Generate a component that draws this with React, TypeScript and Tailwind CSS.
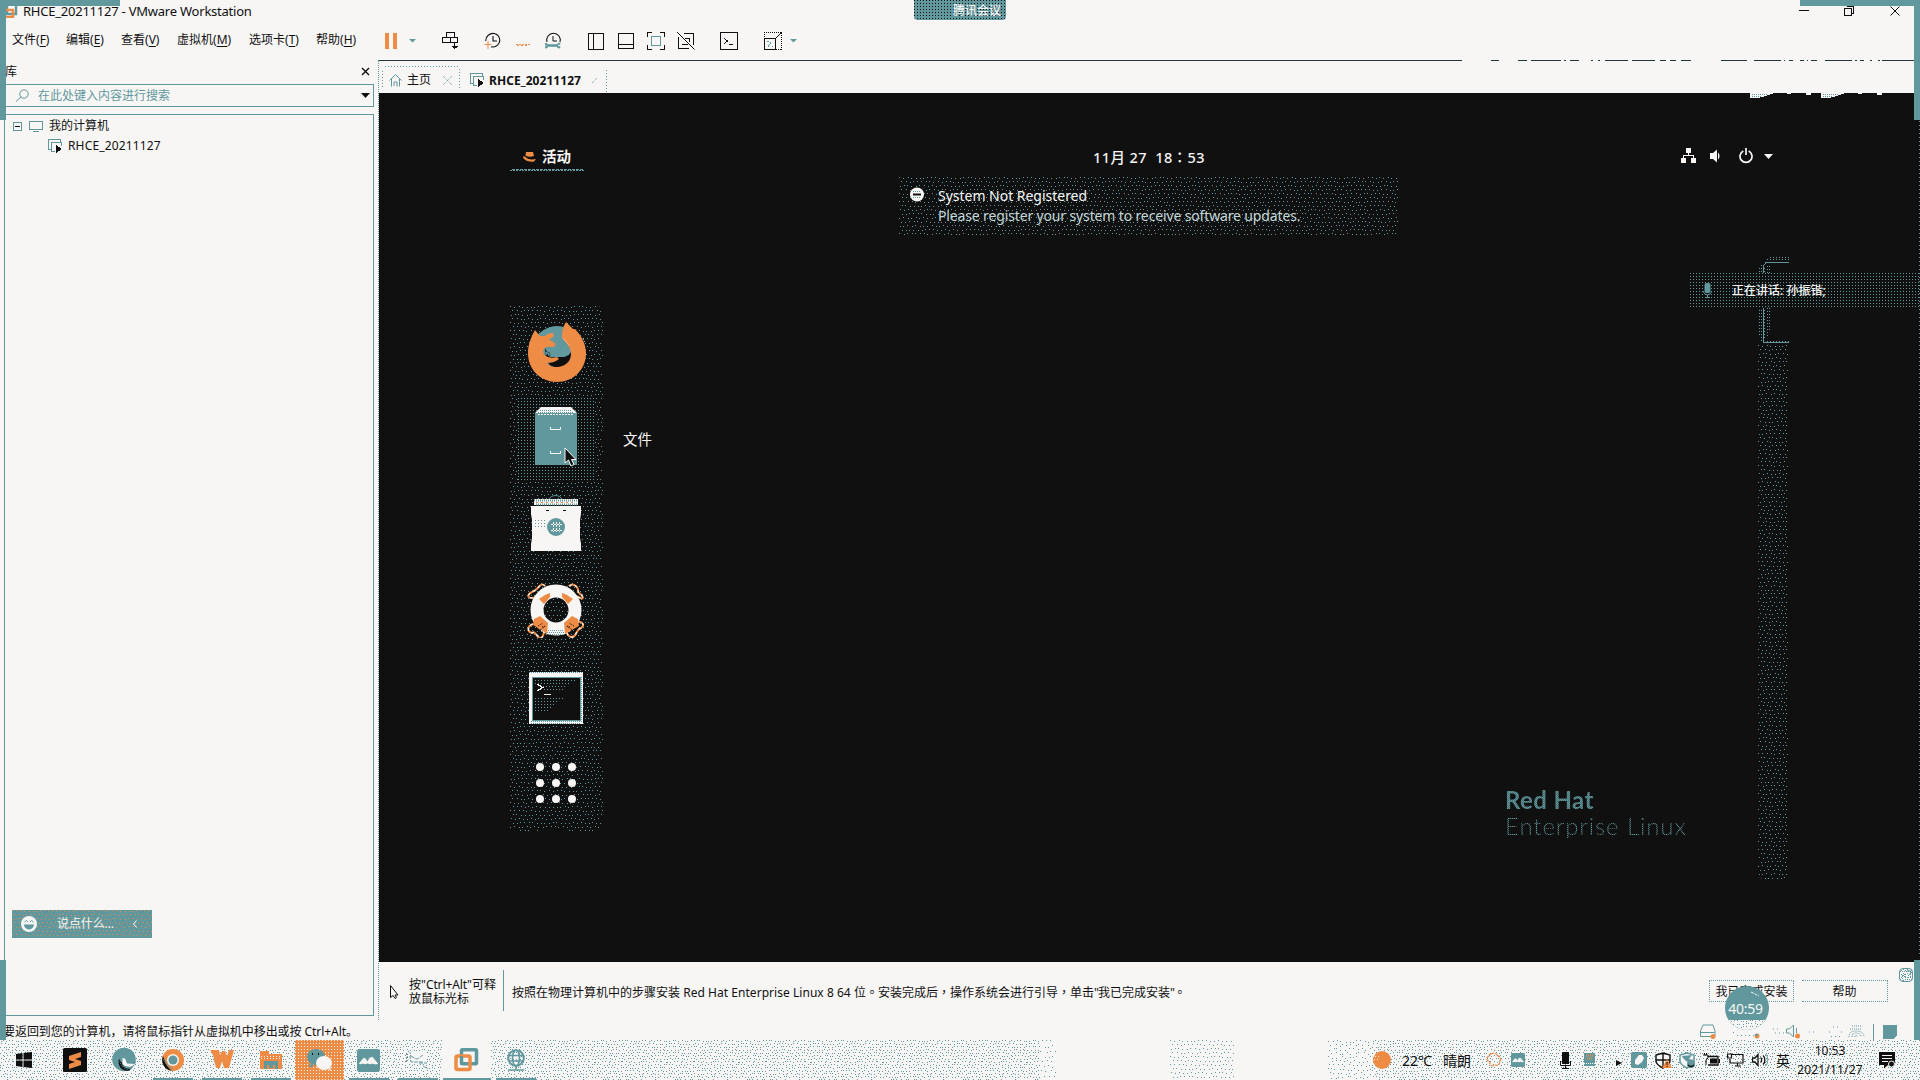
import { useId, type ReactNode } from 'react';

const TEAL = '#61989e';
const INK = '#101010';
const PAPER = '#f7f6f5';
const ORANGE = '#ee8c46';

/* Speckled fill: one pixel dots on a jittered grid, repeated as a tile. */
function Speckle({ cell = 4, jitter = 1, color = TEAL, className = '' }: { cell?: number; jitter?: number; color?: string; className?: string }) {
  const id = useId();
  const n = 24;
  const size = cell * n;
  let seed = 7 + cell * 13;
  const rnd = () => {
    seed = (seed * 1103515245 + 12345) % 2147483648;
    return seed / 2147483648;
  };
  let d = '';
  for (let r = 0; r < n; r++) {
    for (let c = 0; c < n; c++) {
      const x = Math.floor(c * cell + (r % 2 && jitter ? cell / 2 : 0) + rnd() * (jitter + 1)) % size;
      const y = Math.floor(r * cell + rnd() * (jitter + 1)) % size;
      d += `M${x} ${y}h1v1h-1z`;
    }
  }
  return (
    <svg aria-hidden className={`pointer-events-none absolute inset-0 h-full w-full ${className}`} shapeRendering="crispEdges">
      <defs>
        <pattern id={id} width={size} height={size} patternUnits="userSpaceOnUse">
          <path d={d} fill={color} />
        </pattern>
      </defs>
      <rect width="100%" height="100%" fill={`url(#${id})`} />
    </svg>
  );
}

function Ico({ w, h, className = '', children, crisp = false }: { w: number; h: number; className?: string; children: ReactNode; crisp?: boolean }) {
  return (
    <svg width={w} height={h} viewBox={`0 0 ${w} ${h}`} fill="none" className={`shrink-0 ${className}`} shapeRendering={crisp ? 'crispEdges' : 'auto'}>
      {children}
    </svg>
  );
}

/* Full-width punctuation centred in its cell. */
function Mark({ children }: { children: ReactNode }) {
  return <span className="font-['Noto_Sans_CJK_TC',sans-serif]">{children}</span>;
}

function VmGlyph({ className = '' }: { className?: string }) {
  return (
    <Ico w={15} h={15} className={className} crisp>
      <path d="M2.5 10.5H.5V.5h12v3M3.5 12.5v-9h10v3M4 12.5h3" stroke={TEAL} />
      <path d="M8 6v8l6-4z" fill={INK} />
    </Ico>
  );
}

function TitleBar() {
  return (
    <header className="flex h-[22px] shrink-0 items-center">
      <Ico w={12} h={13} className="ml-[6px]">
        <path d="M1 1v8h9V1" stroke={TEAL} strokeWidth="2.4" />
        <path d="M0 5h7v7H0" stroke={ORANGE} strokeWidth="2.4" />
      </Ico>
      <span className="ml-[5px] whitespace-pre text-[13px] leading-[22px] tracking-[-0.230px]">RHCE_20211127 - VMware Workstation</span>
      <div className="ml-auto flex items-center pr-[20px]">
        <Ico w={10} h={12} crisp><path d="M0 5.5h10" stroke={INK} /></Ico>
        <Ico w={10} h={12} className="ml-[35px]" crisp><path d="M.5 3.500h7v7h-7zM2.500 1.500h7v7h-2" stroke={INK} /></Ico>
        <Ico w={10} h={12} className="ml-[36px]"><path d="M.5 1.500l9 9M9.500 1.500l-9 9" stroke={INK} /></Ico>
      </div>
    </header>
  );
}

const MENUS = [
  { t: '文件', k: 'F', c: 'w-[54px]' },
  { t: '编辑', k: 'E', c: 'w-[55px]' },
  { t: '查看', k: 'V', c: 'w-[56px]' },
  { t: '虚拟机', k: 'M', c: 'w-[72px]' },
  { t: '选项卡', k: 'T', c: 'w-[67px]' },
  { t: '帮助', k: 'H', c: 'w-[69px]' },
];

function MenuRow() {
  return (
    <nav className="flex h-[38px] shrink-0 items-center pl-[12px] text-[12px]">
      {MENUS.map((m) => (
        <span key={m.k} className={`${m.c} pb-[2px] whitespace-nowrap`}>
          {m.t}(<u className="underline-offset-2">{m.k}</u>)
        </span>
      ))}
      <Ico w={12} h={16} crisp><path d="M0 0h4v16H0zM8 0h4v16H8z" fill={ORANGE} /></Ico>
      <Ico w={7} h={4} className="ml-[12px]"><path d="M0 0h7L3.500 3.500z" fill={TEAL} /></Ico>
      <Ico w={18} h={18} className="ml-[26px]" crisp>
        <path d="M4.500 5.500v-5h8v5M.5 5.500h8v5h-8zM8.500 5.500h7v5h-7M12.500 10.500v6M9.500 14.500h6M10.500 15.500h4" stroke={INK} />
      </Ico>
      <Ico w={18} h={18} className="ml-[24px]">
        <path d="M4.500 3A6.800 6.800 0 1 1 7 14.700M1.800 9a7 7 0 0 1 2.700-6M9 4v5h4" stroke={INK} strokeWidth="1.100" />
        <path d="M.5 12.500h7M4 9v8" stroke={ORANGE} />
      </Ico>
      <Ico w={14} h={18} className="ml-[14px]" crisp>
        <path d="M0 12.500h14M1 13.500h2M5 13.500h2M9 13.500h2" stroke={ORANGE} strokeDasharray="2 1" />
      </Ico>
      <Ico w={18} h={18} className="ml-[15px]">
        <path d="M2 10A6.800 6.800 0 1 1 15 10" stroke={INK} strokeWidth="1.100" />
        <path d="M8 4v5h4" stroke={INK} />
        <path d="M0 11.500h2l1 1h9l1.500-1.500H15v1.500h-2v2h2V16h-2l-1.500-1.500H3l-1 1.500H0v-1.500h1.500v-1.500H0z" fill={TEAL} stroke={TEAL} strokeWidth=".6" />
      </Ico>
      <Ico w={16} h={17} className="ml-[25px]" crisp><path d="M.5.5h15v16H.5zM5.500.5v16" stroke={INK} /></Ico>
      <Ico w={16} h={17} className="ml-[14px]" crisp><path d="M.5.5h15v15H.5zM.5 11.500h15" stroke={INK} /></Ico>
      <Ico w={18} h={18} className="ml-[13px]" crisp>
        <path d="M.5 5V.5H5M13 .5h4.500V5M17.500 13v4.500H13M5 17.500H.5V13" stroke={INK} />
        <path d="M4.500 4.500h9v9h-9z" stroke={TEAL} />
      </Ico>
      <Ico w={18} h={18} className="ml-[12px]">
        <path d="M7 1.500h9.500v11M1.500 5v11h10M5 12.500h5.500M12.500 10V6H8" stroke={INK} shapeRendering="crispEdges" />
        <path d="M0 0l17.500 17.500" stroke={INK} />
      </Ico>
      <Ico w={18} h={18} className="ml-[25px]" crisp>
        <path d="M.5.5h17v17H.5z" stroke={INK} />
        <path d="M4.500 6.500l3 2.500-3 2.500M9 12.500h4" stroke={INK} />
      </Ico>
      <Ico w={18} h={18} className="ml-[26px]" crisp>
        <path d="M0 .5h17.500V18" stroke={INK} strokeDasharray="1 1" />
        <path d="M.5 0v6M12 17.500h6" stroke={INK} strokeDasharray="1 1" />
        <path d="M.5 6.500h11v11H.5zM11.500 6.500l6-6" stroke={INK} />
        <path d="M3 9.500h2M7 10.500l-3 4M4 13.500h1M8 14.500h1" stroke={TEAL} />
      </Ico>
      <Ico w={7} h={4} className="ml-[8px]"><path d="M0 0h7L3.500 3.500z" fill={TEAL} /></Ico>
    </nav>
  );
}

function Library() {
  return (
    <aside className="flex w-[374px] shrink-0 flex-col text-[12px]">
      <div className="flex h-[24px] items-center pr-[4px] pl-[5px]">
        <span>库</span>
        <Ico w={9} h={9} className="mb-[2px] ml-auto"><path d="M1 1l7 7M8 1L1 8" stroke={INK} strokeWidth="1.400" /></Ico>
      </div>
      <div className="flex h-[23px] items-center border border-l-0 border-[#61989e] pr-[3px] text-[#61989e]">
        <Ico w={13} h={13} className="ml-[16px]"><circle cx="8" cy="5" r="4.200" stroke={TEAL} /><path d="M5 8l-5 4.500" stroke={TEAL} /></Ico>
        <span className="ml-[9px]">在此处键入内容进行搜索</span>
        <Ico w={9} h={5} className="ml-auto"><path d="M0 0h9L4.500 5z" fill={INK} /></Ico>
      </div>
      <div className="mt-[7px] ml-[4px] flex h-[902px] flex-col border border-[#61989e]">
        <div className="mt-px flex h-[20px] items-center pl-[8px]">
          <Ico w={9} h={9} crisp><rect x=".5" y=".5" width="8" height="8" rx="1" stroke={TEAL} /><path d="M2 4.500h5" stroke={INK} /></Ico>
          <Ico w={14} h={11} className="ml-[7px]" crisp><path d="M.5.5h13v8H.5zM4 10.500h6" stroke={TEAL} /></Ico>
          <span className="ml-[6px]">我的计算机</span>
        </div>
        <div className="flex h-[20px] items-center pl-[43px]">
          <VmGlyph />
          <span className="ml-[5px] tracking-[0.150px]">RHCE_20211127</span>
        </div>
        <div className="relative mt-auto mb-[77px] ml-[7px] flex h-[28px] w-[140px] items-center bg-[#61989e] text-[#f7f6f5]">
          <Speckle cell={4} color={ORANGE} />
          <Ico w={16} h={16} className="relative ml-[9px]">
            <circle cx="8" cy="8" r="8" fill={PAPER} />
            <path d="M3.500 6l2-1.500L7 6M9 6l1.500-1.500 2 1.500" stroke={TEAL} />
            <path d="M3 8.500h10a5 5 0 0 1-10 0z" fill={TEAL} />
          </Ico>
          <span className="relative ml-[20px] tracking-[-0.100px]">说点什么...</span>
          <Ico w={4} h={8} className="relative ml-[19px]"><path d="M3.500.5L.5 4l3 3.500" stroke={PAPER} /></Ico>
        </div>
      </div>
    </aside>
  );
}

const EDGE: [number, number][] = [
  [0, 1462], [1491, 1499], [1518, 1527], [1531, 1561], [1564, 1566], [1570, 1579], [1591, 1593], [1598, 1600], [1605, 1628],
  [1632, 1655], [1660, 1666], [1670, 1676], [1681, 1691], [1721, 1747], [1754, 1781], [1784, 1785], [1789, 1793], [1800, 1804],
  [1807, 1808], [1811, 1817], [1825, 1852], [1855, 1857], [1860, 1864], [1870, 1872], [1878, 1880], [1882, 1914],
];

function Tabs() {
  return (
    <div className="flex h-[33px] shrink-0 flex-col">
      <svg width="1541" height="1" viewBox="379 0 1541 1" shapeRendering="crispEdges" className="shrink-0">
        {EDGE.map(([a, b]) => <path key={a} d={`M${a || 379} .5H${b}`} stroke="#22393b" />)}
      </svg>
      <div className="flex flex-1 items-stretch text-[12px]">
        <div className="relative mt-[4px] ml-[3px] flex w-[78px] items-center pt-[2px] pl-[7px]">
          <Ico w={78} h={24} className="absolute top-[1px] left-0" crisp>
            <path d="M3 .5h73M77.500 3v20M.5 5v18" stroke={TEAL} strokeDasharray="1 2" />
          </Ico>
          <Ico w={13} h={13}><path d="M.5 6.500l6-6 6 6M2.500 5v7.500M10.500 5v7.500M5 12V8h3v4.500" stroke={TEAL} /></Ico>
          <span className="ml-[5px]">主页</span>
          <Ico w={9} h={9} className="ml-[12px]"><path d="M0 0l9 9M9 0L0 9" stroke={TEAL} strokeDasharray="1 1" /></Ico>
        </div>
        <div className="mt-[8px] flex w-[146px] items-center pb-px pl-[10px]">
          <VmGlyph />
          <span className="ml-[4px] font-bold tracking-[0.050px]">RHCE_20211127</span>
          <Ico w={5} h={5} className="ml-auto mr-[9px]"><path d="M0 5l5-5" stroke={TEAL} strokeDasharray="1 1" /></Ico>
        </div>
        <Ico w={1} h={22} className="mt-[9px]" crisp><path d="M.5 0v22" stroke={TEAL} strokeDasharray="1 2" /></Ico>
      </div>
    </div>
  );
}

function GnomeBar() {
  return (
    <div className="flex h-[42px] items-center pr-[147px] pl-[131px] font-semibold text-[#f7f6f5]">
      <div className="relative mt-[2px] flex h-[26px] w-[74px] items-center pl-[12px]">
        <Ico w={15} h={11}>
          <path d="M4 0h7l1 4c-3 1-6 1-8.500-.500z" fill={ORANGE} />
          <path d="M1 4.500c0 3 5 6 11 5l2-2.500c-5 1-9 0-11-2.500z" fill={ORANGE} />
        </Ico>
        <span className="ml-[5px] text-[14.500px]">活动</span>
        <Ico w={74} h={2} className="absolute -bottom-px left-0" crisp>
          <path d="M0 1.500h74" stroke={TEAL} strokeDasharray="2 1" />
          <path d="M2 .5h72" stroke={TEAL} strokeDasharray="3 1" />
        </Ico>
      </div>
      <span className="mt-[2px] ml-[509px] w-[128px] whitespace-pre text-[14.500px] font-medium tracking-[0.400px]">11月 27  18<Mark>：</Mark>53</span>
      <div className="ml-auto flex items-center">
        <Ico w={16} h={16} crisp><path d="M5 0h5v5H5zM0 10h5v5H0zM10 10h5v5h-5z" fill={PAPER} /><path d="M7.500 5v3M2.500 10V7.500h10V10" stroke={PAPER} /></Ico>
        <Ico w={14} h={14} className="ml-[13px]"><path d="M0 4h3l4-3.500v13L3 10H0zM8 3.500c2 1.500 2 5.500 0 7z" fill={PAPER} /></Ico>
        <Ico w={14} h={16} className="ml-[15px]"><path d="M4.300 3a6 6 0 1 0 5.400 0M7 0v7" stroke={PAPER} strokeWidth="1.700" /></Ico>
        <Ico w={9} h={5} className="ml-[11px]"><path d="M0 0h9L4.500 5z" fill={PAPER} /></Ico>
      </div>
    </div>
  );
}

function Dock() {
  return (
    <div className="relative ml-[131px] h-[525px] w-[93px] overflow-hidden rounded-r-md">
      <Speckle cell={4} />
      <div className="absolute inset-x-[8px] top-[92px] h-[84px] bg-[#101010]"><Speckle cell={3} jitter={0} /></div>
      <div className="relative flex flex-col items-center pr-px">
        <Ico w={60} h={62} className="mt-[15px] ml-px">
          <circle cx="30" cy="30" r="25" fill={TEAL} />
          <path d="M18 27c2 2 1 4 0 6 4 2 8 3 13 3 6 0 10 0 13-5l2 3c1 8-6 13-13 13-9 0-13-5-14-10z" fill={INK} />
          <path d="M19 29c0 2 1 5 4 7h14c4-1 6-3 6-7l-6-8-12 1z" fill={TEAL} />
          <path d="M19 30l5 3M20 33l4 2M36 37l7-3M35 39l8-3M34 41l8-3" stroke={INK} strokeDasharray="1 1" />
          <path d="M8 9c-4 7-7 15-7 23 0 17 13 29 29 29s29-12 29-29c0-9-5-18-11-24l-2 0-7-7c-4 6-4 12-4 16 4 5 9 9 9 16 0 8-7 13-14 13-5 0-8-1-10-4 4 0 8-1 12-4l-2-2c-4 1-8 1-11-1-3-2-4-6-1-8 2-2 6-1 9-1l2-3-4-3-3-1 5-4-1-3c-4 0-6 1-8 3l-5 0z" fill={ORANGE} />
          <path d="M37 18l5 6M56 17l2 5" stroke={PAPER} strokeDasharray="1 2" />
        </Ico>
        <div className="relative mt-[23px] mr-px">
          <Ico w={42} h={60}>
            <path d="M0 7h42v52H0z" fill={TEAL} />
            <path d="M6 1h30l6 6H0z" fill={PAPER} />
            <path d="M3 6.500h36M6 8.500h30M15 10.500h12M5 4.500h32" stroke={TEAL} strokeDasharray="1 1" />
            <path d="M3 8.500h36" stroke={PAPER} strokeDasharray="2 1" />
            <path d="M15.500 21v2.500h10V21M15.500 45v2.500h10V45" stroke={PAPER} />
          </Ico>
          <Ico w={14} h={20} className="absolute top-[41px] left-[29px]">
            <path d="M1 1v15l3.500-3 2.500 6 3-1.500-2.500-5H12z" fill={INK} stroke={PAPER} />
          </Ico>
        </div>
        <Ico w={50} h={58} className="mt-[28px]">
          <path d="M18 6c1-6 12-6 13 0" stroke={TEAL} />
          <path d="M3 5h44v6H3z" fill={PAPER} />
          <path d="M3 6.500h44M5 10.500h41" stroke={TEAL} strokeWidth="2" strokeDasharray="1 1" />
          <path d="M5 8.500h38" stroke={ORANGE} strokeDasharray="2 3" />
          <path d="M0 12h50v8l-1 6v18l1 6v7H0v-7l1-6V26L0 20z" fill={PAPER} />
          <path d="M15 16.500h3M32 16.500h3" stroke={INK} />
          <path d="M4 26.500h12M4 29.500h12M4 32.500h12" stroke={TEAL} strokeDasharray="1 2" />
          <circle cx="25" cy="33" r="9" fill={TEAL} />
          <path d="M20 30.500h11M20 36.500h11M22.500 28v10M25.500 28v10M28.500 28v10" stroke={PAPER} strokeDasharray="2 1" />
        </Ico>
        <Ico w={60} h={56} className="mt-[30px]">
          <path d="M19 4c-5-5-6 4-13 6-6 3-5 8 6 5M43 4c5-4 10 2 9 6 6 4 7 10-1 4M7 42c-6 2-6 8-1 9 4-3 5 6 9 5 3-1 2-6 4-7M50 40c7-1 9 3 5 6-6 2-4 10-10 9-4-1-3-4-6-6" stroke={ORANGE} strokeWidth="2" />
          <path d="M19 4c-5-5-6 4-13 6-6 3-5 8 6 5M43 4c5-4 10 2 9 6 6 4 7 10-1 4M7 42c-6 2-6 8-1 9 4-3 5 6 9 5 3-1 2-6 4-7M50 40c7-1 9 3 5 6-6 2-4 10-10 9-4-1-3-4-6-6" stroke={PAPER} strokeWidth="1.200" strokeDasharray="3 3" />
          <circle cx="30" cy="28" r="19" stroke={PAPER} strokeWidth="13" />
          <path d="M13 17l6-4 5-2 0 4-6 7zM47 17l-6-4-5-2 0 4 6 7z" fill={ORANGE} />
          <path d="M8 37l6-3 8 7-1 11-4-3-10-6zM52 37l-6-3-8 7 1 11 5-3 9-5z" fill={ORANGE} />
          <path d="M12 44l5-3M14 48l5-4M16 45l4-1M48 44l-5-3M46 48l-5-4M44 45l-4-1" stroke={INK} strokeDasharray="1 1" />
          <path d="M22 48.500h16M21 50.500h18M24 52.500h12" stroke={TEAL} strokeDasharray="1 1" />
        </Ico>
        <Ico w={54} h={52} className="mt-[34px]" crisp>
          <path d="M0 0h54v52H0z" fill={PAPER} />
          <path d="M0 .5h54M52.500 5v46M2 49.500h50M2 51.500h50" stroke={TEAL} strokeDasharray="1 1" />
          <path d="M3.500 5.500h48v43h-48z" fill={INK} stroke={TEAL} />
          <path d="M6 8.500h40M6 11.500h36M14 14.500h24M15 17.500h20M6 26.500h28M6 29.500h22M6 32.500h20M6 35.500h16M6 38.500h14" stroke={TEAL} strokeDasharray="1 2" />
          <path d="M8.500 12l5 3.500-5 3.500M15 22.500h7" stroke={PAPER} strokeWidth="1.400" />
        </Ico>
        <div className="mt-[39px] grid grid-cols-3 gap-[8px]">
          {Array.from({ length: 9 }, (_, i) => <i key={i} className="size-[8px] rounded-full bg-[#f7f6f5]" />)}
        </div>
      </div>
    </div>
  );
}

function Screen() {
  return (
    <main className="relative flex h-[869px] shrink-0 flex-col bg-[#101010] pt-[42px] font-['Noto_Sans','Noto_Sans_CJK_SC',sans-serif]">
      <GnomeBar />
      <section className="relative ml-[520px] flex h-[59px] w-[499px] pt-[8px] pl-[11px] text-[#f7f6f5]">
        <Speckle cell={4} />
        <Ico w={15} h={15} className="relative mt-[2px]"><circle cx="7" cy="7.500" r="7" fill={PAPER} /><path d="M3 4.500h8M3 10.500h8" stroke={TEAL} strokeDasharray="1 1" /><path d="M3 7.500h8" stroke={INK} strokeWidth="2" /></Ico>
        <div className="relative mt-px ml-[13px] text-[14px] leading-[20px]">
          <p className="tracking-[-0.020px]">System Not Registered</p>
          <p className="tracking-[-0.140px] whitespace-nowrap text-[#c4d7d9]">Please register your system to receive software updates.</p>
        </div>
      </section>
      <div className="mt-[70px] flex">
        <Dock />
        <span className="mt-[123px] ml-[20px] text-[14.500px] leading-[21px] text-[#f7f6f5]">文件</span>
      </div>

      <svg className="absolute top-0 left-[1370px]" width="135" height="6" shapeRendering="crispEdges">
        <path d="M1 0h24l-8 3-8 2H1zM38 0h4v1h-4zM57 0h5v2h-5zM72 0h24l-8 3-8 2h-8zM109 0h4v1h-4zM128 0h5v2h-5z" fill={PAPER} />
        <path d="M3 1.500h16M3 3.500h10M74 1.500h16M74 3.500h10" stroke={TEAL} strokeDasharray="1 1" />
      </svg>
      <svg className="absolute top-[28px] right-0" width="1" height="836"><path d="M.5 0v836" stroke={TEAL} strokeDasharray="1 3" /></svg>

      <svg className="absolute top-[163px] left-[1379px]" width="32" height="90" shapeRendering="crispEdges">
        <path d="M31 6.500H8l-3 4V86.500H31" stroke={TEAL} fill="none" />
        <path d="M1.500 12v68M3.500 9v76M9.500 10v70M11.500 10v66M6.500 12v70M12 1.500h19M9 3.500h22M9 85.500h22" stroke={TEAL} strokeDasharray="1 2" fill="none" />
      </svg>
      <div className="absolute top-[252px] left-[1379px] h-[534px] w-[30px] overflow-hidden rounded-b-md"><Speckle cell={4} /></div>
      <div className="absolute top-[180px] right-px flex h-[35px] w-[229px] items-center bg-[#101010] text-[12px] text-[#f7f6f5]">
        <Speckle cell={3} jitter={0} />
        <Ico w={9} h={15} className="relative ml-[13px]"><rect x="1.500" width="6" height="10" rx="2" fill={TEAL} /><path d="M.5 8c0 5 8 5 8 0M4.500 12v2M2 14.500h5" stroke={TEAL} /></Ico>
        <span className="relative ml-[20px] font-medium">正在讲话: 孙振锴;</span>
      </div>

      <div className="absolute top-[692px] left-[1126px] text-[#61989e]">
        <p className="bg-[repeating-conic-gradient(#61989e_0_25%,#487074_0_50%)] bg-[length:2px_2px] bg-clip-text font-['Lato',sans-serif] text-[24px] leading-[30px] font-bold tracking-[0.400px] text-transparent">Red Hat</p>
        <p className="-mt-px bg-[repeating-conic-gradient(#61989e_0_25%,#2a3b3d_0_50%)] bg-[length:2px_2px] bg-clip-text font-['Lato',sans-serif] text-[24px] leading-[24px] font-light tracking-[0.900px] text-transparent">Enterprise Linux</p>
      </div>
    </main>
  );
}

function InfoBar() {
  return (
    <div className="flex h-[58px] shrink-0 pl-[11px] text-[12px]">
      <Ico w={9} h={14} className="mt-[23px]"><path d="M.5.5v12l2.500-2 2 3 1.500-1-1.500-2.500h3z" stroke={INK} /></Ico>
      <p className="mt-[16px] ml-[10px] w-[94px] leading-[14px]">按"<span className="tracking-[-0.100px]">Ctrl+Alt</span>"可释<br />放鼠标光标</p>
      <i className="mt-[8px] h-[41px] w-px bg-[#61989e]" />
      <p className="mt-[21px] ml-[8px] leading-[18px] whitespace-nowrap">
        按照在物理计算机中的步骤安装<span className="tracking-[0.040px]"> Red Hat Enterprise Linux 8 64 </span>位<Mark>。</Mark>安装完成后<Mark>，</Mark>操作系统会进行引导<Mark>，</Mark>单击<span className="tracking-[-1px]">"</span>我已完成安装<span className="tracking-[-1px]">"</span><Mark>。</Mark>
      </p>
      <div className="ml-auto flex gap-[8px] pt-[18px] pr-[32px]">
        <button className="h-[22px] w-[85px] border border-dotted border-[#61989e] pt-px whitespace-nowrap">我已完成安装</button>
        <button className="h-[22px] w-[86px] border border-l-0 border-dotted border-[#61989e] pt-px">帮助</button>
      </div>
    </div>
  );
}

function StatusBar() {
  return (
    <div className="flex h-[20px] shrink-0 items-center pt-[3px] pl-[3px] text-[12px]">
      <span className="tracking-[-0.060px] whitespace-nowrap">要返回到您的计算机，请将鼠标指针从虚拟机中移出或按 Ctrl+Alt。</span>
      <div className="mr-[22px] ml-auto flex items-center">
        <Ico w={17} h={15} className="-ml-[3px]"><path d="M3 1h10l2 6v5.500H.5V7zM.5 8.500h14" stroke={TEAL} /><circle cx="13" cy="12.500" r="2.500" fill={ORANGE} /></Ico>
        <Ico w={60} h={15} className="ml-[14px]"><path d="M6 11.500h22M2 8.500h4M42 5h8M44 9h9" stroke={TEAL} strokeDasharray="1 3" /><circle cx="26" cy="12" r="2.500" fill={ORANGE} /><circle cx="25.500" cy="11" r="1.300" fill={TEAL} /></Ico>
        <Ico w={16} h={15} className="-ml-[5px]"><path d="M.5 5h3l4-4v12l-4-4h-3zM10.500 4v5" stroke={TEAL} /><circle cx="11.500" cy="12" r="2.500" fill={ORANGE} /></Ico>
        <Ico w={66} h={15} className="ml-[7px]">
          <path d="M0 8h6M24 3h8M20 8h4M32 8h3M22 12.500h9" stroke={TEAL} strokeDasharray="1 3" />
          <path d="M40 13c0-4 2-6 7-6s8 2 8 6M43 13c0-3 1-4 4-4s5 1 5 4M46 13c0-2 2-2 3 0M43 2h9M41 5h12" stroke={TEAL} strokeDasharray="1 1" />
        </Ico>
        <i className="-ml-[2px] h-[16px] w-px bg-[#61989e]" />
        <Ico w={15} h={14} className="ml-[9px]" crisp><path d="M0 0h14v10l-4 4H0z" fill={TEAL} /></Ico>
      </div>
    </div>
  );
}

function Mountain({ s }: { s: number }) {
  return (
    <svg width={s} height={s} viewBox="0 0 24 24" className="shrink-0">
      <rect width="24" height="24" rx="2.500" fill={TEAL} />
      <path d="M2 15l5-6 2 1 2 3 2-4 3-1 6 7-1 1h-3l-2-1-2 1-3-1-3 1-2-1-2 1H3z" fill={PAPER} />
    </svg>
  );
}

const APPS: { name: string; cell?: string; bar?: string; icon: ReactNode }[] = [
  { name: 'start', icon: <Ico w={16} h={16} className="mr-[3px]"><path d="M0 2l6.500-1v6.500H0zM7.500 1L16 0v7.500H7.500zM0 8.500h6.500V15L0 14zM7.500 8.500H16V16l-8.500-1z" fill={INK} /></Ico> },
  {
    name: 'sublime',
    icon: (
      <Ico w={24} h={24}><rect width="24" height="24" rx="1.500" fill={INK} /><path d="M6 8l12-4v5l-6 2 6 2v4L6 21v-5l6-2-6-2z" fill={ORANGE} /></Ico>
    ),
  },
  {
    name: 'edge',
    icon: (
      <Ico w={24} h={24}><circle cx="12" cy="11.500" r="11.800" fill={TEAL} /><path d="M7 11c-2 7 3 12 9 12l3-2c-6 0-9-3-9-6z" fill={INK} /><path d="M8 13c0 4 3 7 8 9" stroke={TEAL} strokeDasharray="1 1" /><path d="M10.500 10v6c3 3 8 4 11 1l1.500-1-8-.5-2-5z" fill={PAPER} /></Ico>
    ),
  },
  {
    name: 'chrome', bar: 'w-[40px]',
    icon: (
      <Ico w={24} h={24}><circle cx="12" cy="12" r="11" fill={ORANGE} /><path d="M2 8c2 5 3 10 9 15A11 11 0 0 1 2 8z" fill={INK} /><path d="M3 11c2 4 4 7 8 10" stroke={TEAL} strokeDasharray="1 1" strokeWidth="2" /><circle cx="12" cy="12" r="6" fill={PAPER} /><circle cx="12" cy="12" r="4.500" fill={TEAL} /></Ico>
    ),
  },
  { name: 'wps', bar: 'w-[40px]', icon: <Ico w={24} h={20}><path d="M0 0h9l1 5 2-4h3l2 5 2-6h5l-5 18h-5l-2-7-2 7H6L3 5z" fill={ORANGE} /></Ico> },
  {
    name: 'files', bar: 'w-[40px]',
    icon: (
      <Ico w={22} h={20}><path d="M0 1h9v3h13v15H0z" fill={ORANGE} /><path d="M1 6.500h20M1 8.500h20" stroke={PAPER} strokeDasharray="1 2" /><path d="M4 11h14v8h-3v-4h-2v3H9v-3H7v4H4z" fill={TEAL} /></Ico>
    ),
  },
  {
    name: 'wechat', cell: 'bg-[#ee8c46]',
    icon: (
      <Ico w={25} h={22} className="relative"><ellipse cx="9" cy="8" rx="9" ry="8" fill={TEAL} /><path d="M2 15l1 4 4-3z" fill={TEAL} /><ellipse cx="17" cy="14" rx="8" ry="7" fill={PAPER} /><path d="M20 19l4 3-1-5z" fill={PAPER} /><path d="M5.500 4v2M11.500 4v2" stroke={INK} /></Ico>
    ),
  },
  { name: 'gallery', bar: 'w-[40px]', icon: <Mountain s={23} /> },
  {
    name: 'board', bar: 'w-[40px]',
    icon: (
      <Ico w={24} h={20}><path d="M1 1h20v12H3z" fill={PAPER} /><path d="M2 1c3 2 3 4 2 6l1 5h12M5 6l5 3c3 0 5-3 7-4M13 13h8M17 16l5 3" stroke={TEAL} strokeDasharray="4 1" /><path d="M1 4v8" stroke={INK} strokeDasharray="1 2" /></Ico>
    ),
  },
  {
    name: 'vmware', cell: 'bg-[#f7f6f5]', bar: 'w-[48px]',
    icon: (
      <Ico w={25} h={24}><rect x="7.500" y="1.800" width="15" height="14" rx="1" stroke={TEAL} strokeWidth="3.500" /><rect x="2" y="8" width="14" height="13.500" rx="1.500" stroke={ORANGE} strokeWidth="3.500" /><path d="M7.500 8v7.500H14" stroke={TEAL} strokeWidth="3" /></Ico>
    ),
  },
  {
    name: 'network', bar: 'w-[40px]',
    icon: (
      <Ico w={20} h={22}><circle cx="10" cy="9" r="7.800" stroke={TEAL} strokeWidth="2" /><ellipse cx="10" cy="9" rx="3.500" ry="8" stroke={TEAL} strokeWidth="1.600" /><path d="M2 6.500h16M2 12h16M10 17v4M2 21h16" stroke={TEAL} strokeWidth="1.500" /></Ico>
    ),
  },
];

function Taskbar() {
  return (
    <footer className="relative flex h-[40px] shrink-0 items-center text-[12px]">
      <div className="absolute inset-y-0 left-0 w-[1040px]"><Speckle cell={3} /></div>
      <div className="absolute inset-y-0 left-[1040px] w-[16px]"><Speckle cell={5} jitter={2} /></div>
      <div className="absolute inset-y-0 left-[1170px] w-[64px]"><Speckle cell={4} /></div>
      <div className="absolute inset-y-0 left-[1328px] w-[44px]"><Speckle cell={4} jitter={2} /></div>
      <div className="absolute inset-y-0 right-0 left-[1372px]"><Speckle cell={3} /></div>
      <div className="relative flex h-full pl-px">
        {APPS.map((a) => (
          <div key={a.name} className={`relative flex w-[49px] items-center justify-center ${a.cell ?? ''}`}>
            {a.name === 'wechat' && <Speckle cell={3} jitter={0} color={PAPER} />}
            {a.icon}
            {a.bar && <i className={`absolute bottom-0 h-[2px] bg-[#61989e] ${a.bar}`} />}
          </div>
        ))}
      </div>
      <div className="relative ml-auto flex h-full items-center pr-[24px]">
        <Ico w={18} h={18}><circle cx="9" cy="9" r="9" fill={ORANGE} /><path d="M2 5.500h6M1 8.500h4" stroke={PAPER} strokeDasharray="1 2" /></Ico>
        <span className="ml-[11px] w-[41px] text-[14px]">22℃</span>
        <span className="w-[43px] text-[14px]">晴朗</span>
        <Ico w={16} h={16}><path d="M5 2c4-2 6 0 6 2 4 0 4 3 3 5 0 4-3 5-5 4-3 2-6 0-5-3-4-1-4-5-1-6 0-1 1-2 2-2z" stroke={ORANGE} strokeWidth="1.300" strokeDasharray="3 1" /></Ico>
        <div className="ml-[9px]"><Mountain s={14} /></div>
        <Ico w={11} h={17} className="ml-[35px]"><rect x="2" width="7" height="12" rx=".5" fill={INK} /><path d="M.5 9v4.500h10V9M5.500 13v3M2 16.500h7" stroke={INK} /></Ico>
        <Ico w={11} h={13} className="mb-[2px] ml-[13px]"><path d="M0 0h11v13H0z" fill={TEAL} /><path d="M2 2.500h8M3 5.500h6" stroke={ORANGE} strokeWidth="2" strokeDasharray="1 1" /><path d="M0 10.500h11" stroke={PAPER} strokeDasharray="1 1" /></Ico>
        <Ico w={6} h={6} className="mt-[6px] ml-[21px]"><path d="M0 0l6 3-6 3z" fill={INK} /></Ico>
        <Ico w={16} h={16} className="ml-[9px]"><rect width="16" height="16" rx="1.500" fill={TEAL} /><path d="M4 12V8l4-5h3l2 3-2 4-4 3z" fill={PAPER} /></Ico>
        <Ico w={17} h={17} className="ml-[8px]"><path d="M8 1L1 3v6c0 3 3 5 7 7 4-2 7-4 7-7V3z" fill={PAPER} /><path d="M8 1L1 3v6c0 3 3 5 7 7 4-2 7-4 7-7V3zM8 1v15M1 8h14" stroke={INK} strokeWidth="1.400" /><path d="M12 7l5 9H7z" fill={ORANGE} /><path d="M12 10v3M12 14v1" stroke={INK} /></Ico>
        <Ico w={17} h={17} className="ml-[7px]"><path d="M8 1L1 3v6c0 3 3 5 7 7 4-2 7-4 7-7V3z" fill={PAPER} stroke={TEAL} strokeWidth="1.400" /><path d="M3 4l10-1-3 4 5 1v2l-4 1-4-2-3-3z" fill={TEAL} /><circle cx="12" cy="12" r="4" fill={TEAL} /><path d="M9 13c2 2 4 2 6 0" stroke={INK} strokeWidth="1.300" /></Ico>
        <Ico w={17} h={14} className="ml-[7px]"><path d="M5 3.500h10v8.500H5M16.500 6v4" stroke={INK} strokeWidth="1.300" /><path d="M7 5.500h7v5H7z" fill={INK} /><path d="M0 2h5v3l-2 2v5M1.500 0v2M3.500 0v2" stroke={INK} /></Ico>
        <Ico w={17} h={14} className="ml-[7px]"><path d="M5 1.500h11v8.500H3V6M8 13h6M10.500 10v3M.5 1h4v4h-4z" stroke={INK} strokeWidth="1.200" /></Ico>
        <Ico w={16} h={14} className="ml-[8px]"><path d="M.5 5h2.500l3-3.500v11L3 9H.5zM8.500 4.500c1.500 1 1.500 4 0 5M11 2.500c2.500 2 2.500 7 0 9" stroke={INK} strokeWidth="1.300" /><path d="M13.500 1c3 3 3 9 0 12" stroke={TEAL} /></Ico>
        <span className="ml-[8px] w-[14px] text-[14px]">英</span>
        <div className="ml-[7px] w-[66px] text-center text-[12px] leading-[19px]"><p>10:53</p><p className="tracking-[0.150px] whitespace-nowrap">2021/11/27</p></div>
        <Ico w={17} h={17} className="ml-[16px]"><path d="M0 0h16v13H9l-4 3.500V13H0z" fill={INK} /><path d="M3 3.500h10M3 6.500h10M3 9.500h6" stroke={PAPER} /><circle cx="12.500" cy="12" r="3" fill={INK} stroke={PAPER} /></Ico>
      </div>
    </footer>
  );
}

/* Corner brackets and floating badges drawn above every window. */
function Overlay() {
  return (
    <div className="pointer-events-none absolute inset-0 text-[12px] text-[#f7f6f5]">
      <i className="absolute top-0 left-0 h-[6px] w-[120px] bg-[#61989e]" />
      <i className="absolute top-0 left-0 h-[120px] w-[6px] bg-[#61989e]" />
      <i className="absolute top-0 right-0 h-[6px] w-[120px] bg-[#61989e]" />
      <i className="absolute top-0 right-0 h-[120px] w-[6px] bg-[#61989e]" />
      <i className="absolute bottom-[40px] left-0 h-[80px] w-[6px] bg-[#61989e]" />
      <i className="absolute right-0 bottom-[40px] h-[80px] w-[6px] bg-[#61989e]" />
      <div className="absolute top-0 left-[914px] flex h-[20px] w-[92px] items-center justify-end overflow-hidden rounded-b-sm bg-[#61989e] pr-[5px]">
        <Speckle cell={3} jitter={0} color={INK} />
        <span className="relative pt-[2px] font-medium">腾讯会议</span>
      </div>
      <div className="absolute top-[968px] left-[1899px] size-[14px] rounded-sm border border-[#61989e]">
        <Speckle cell={2} jitter={1} />
        <Ico w={12} h={12} className="absolute inset-0"><path d="M7 2h4M10.500 2v4M1 9l4-4" stroke={TEAL} /></Ico>
      </div>
      <div className="absolute top-[986px] left-[1725px] flex size-[44px] items-center justify-center overflow-hidden rounded-full bg-[#61989e]">
        <div className="absolute inset-x-0 bottom-0 h-[10px] bg-[#f7f6f5]"><Speckle cell={3} /></div>
        <Ico w={10} h={6} className="absolute top-[5px] right-[9px]"><path d="M1 1l8 4" stroke={PAPER} strokeDasharray="3 1" /></Ico>
        <span className="relative mr-[3px] pt-px text-[14px] tracking-[-0.300px]">40:59</span>
      </div>
    </div>
  );
}

export default function App() {
  return (
    <div className="relative flex h-[1080px] w-[1920px] flex-col overflow-hidden bg-[#f7f6f5] font-['Noto_Sans','Noto_Sans_CJK_SC',sans-serif] text-[#101010]">
      <TitleBar />
      <MenuRow />
      <div className="flex h-[960px] shrink-0">
        <Library />
        <div className="ml-[4px] flex min-w-0 flex-1 flex-col border-l border-dotted border-[#61989e]">
          <Tabs />
          <Screen />
          <InfoBar />
        </div>
      </div>
      <StatusBar />
      <Taskbar />
      <Overlay />
    </div>
  );
}
